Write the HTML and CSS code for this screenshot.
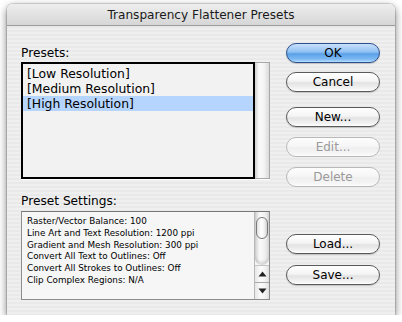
FILE: index.html
```html
<!DOCTYPE html>
<html>
<head>
<meta charset="utf-8">
<link rel="stylesheet" href="styles.css">
</head>
<body>
<div class="window">
  <div class="titlebar">Transparency Flattener Presets</div>
  <div class="content">
    <div class="left">
      <div class="label">Presets:</div>
      <div class="listbox">
        <div class="list">
          <div class="item">[Low Resolution]</div>
          <div class="item">[Medium Resolution]</div>
          <div class="item selected">[High Resolution]</div>
        </div>
        <div class="vscroll empty"></div>
      </div>
      <div class="label settings-label">Preset Settings:</div>
      <div class="settings">
        <div class="settings-text">
          <div>Raster/Vector Balance: 100</div>
          <div>Line Art and Text Resolution: 1200 ppi</div>
          <div>Gradient and Mesh Resolution: 300 ppi</div>
          <div>Convert All Text to Outlines: Off</div>
          <div>Convert All Strokes to Outlines: Off</div>
          <div>Clip Complex Regions: N/A</div>
        </div>
        <div class="vscroll">
          <div class="track"><div class="thumb"></div></div>
          <div class="arrow up"><svg width="9" height="6" viewBox="0 0 9 6"><path d="M4.5 0.5 L8.5 5.5 L0.5 5.5 Z" fill="#222"/></svg></div>
          <div class="arrow down"><svg width="9" height="6" viewBox="0 0 9 6"><path d="M0.5 0.5 L8.5 0.5 L4.5 5.5 Z" fill="#222"/></svg></div>
        </div>
      </div>
    </div>
    <div class="right">
      <div class="btn default b-ok">OK</div>
      <div class="btn b-cancel">Cancel</div>
      <div class="btn b-new">New...</div>
      <div class="btn disabled b-edit">Edit...</div>
      <div class="btn disabled b-delete">Delete</div>
      <div class="btn b-load">Load...</div>
      <div class="btn b-save">Save...</div>
    </div>
  </div>
</div>
</body>
</html>
```

FILE: styles.css
```css
html, body {
  margin: 0;
  padding: 0;
  background: #ffffff;
}
body {
  font-family: "DejaVu Sans", "Liberation Sans", sans-serif;
  color: #000;
}
.window {
  margin: 4px 0 0 7px;
  width: 388px;
  height: 311px;
  border-radius: 6px 6px 0 0;
  overflow: hidden;
  box-shadow: 0 3px 9px rgba(0, 0, 0, 0.55), 0 0 0 1px rgba(0, 0, 0, 0.12);
  background: repeating-linear-gradient(to bottom, #efefef 0px, #efefef 2px, #e9e9e9 2px, #e9e9e9 4px);
}
.titlebar {
  height: 21px;
  border-bottom: 1px solid #9c9c9c;
  background: linear-gradient(to bottom, #eeeeee, #d6d6d6);
  text-align: center;
  font-size: 12.1px;
  line-height: 22px;
  color: #1a1a1a;
}
.content {
  display: flex;
  padding-left: 14px;
  gap: 16px;
}
.left {
  width: 249px;
  padding-top: 19px;
}
.label {
  font-size: 12.2px;
  line-height: 16px;
  height: 16px;
  margin-bottom: 1px;
}
.listbox {
  display: flex;
  height: 117px;
  box-shadow: 0 1px 0 #ffffff;
}
.list {
  flex: 1;
  border: 2px solid #000;
  background: #f2f2f2;
  padding-top: 2px;
}
.item {
  font-size: 12.4px;
  line-height: 15px;
  height: 15px;
  padding-left: 4px;
  white-space: nowrap;
}
.item.selected {
  background: #b5d5ff;
}
.vscroll {
  width: 15px;
  display: flex;
  flex-direction: column;
}
.vscroll.empty {
  border: 1px solid #a8a8a8;
  border-left: none;
  width: 14px;
  background: linear-gradient(to right, #cfcfcf, #fbfbfb 30%, #f3f3f3 65%, #dadada);
}
.settings-label {
  margin-top: 14px;
  margin-bottom: 2px;
}
.settings {
  display: flex;
  height: 87px;
  border: 1px solid #8c8c8c;
  border-top-color: #777;
  background: #f6f6f6;
}
.settings-text {
  flex: 1;
  padding: 4px 0 0 5px;
  font-size: 8.8px;
  line-height: 11.8px;
  white-space: nowrap;
}
.settings .vscroll {
  width: 14px;
  border-left: 1px solid #b8b8b8;
}
.track {
  flex: 1;
  position: relative;
  background: linear-gradient(to right, #d4d4d4, #fafafa 35%, #f0f0f0 70%, #dcdcdc);
  border-bottom-left-radius: 7px;
  border-bottom-right-radius: 7px;
  box-shadow: inset 0 -3px 3px rgba(0, 0, 0, 0.12);
}
.thumb {
  position: absolute;
  left: 1px;
  right: 1px;
  top: 5px;
  height: 22px;
  border: 1px solid #7a7a7a;
  border-radius: 7px;
  box-sizing: border-box;
  background: linear-gradient(to right, #e0e0e0, #ffffff 40%, #f4f4f4 70%, #d0d0d0);
}
.arrow {
  height: 16px;
  display: flex;
  align-items: center;
  justify-content: center;
  background: linear-gradient(to right, #e6e6e6, #fbfbfb 40%, #f4f4f4 70%, #e0e0e0);
}
.arrow.up {
  border-top: 1px solid #c4c4c4;
}
.arrow.down {
  border-top: 1px solid #a8a8a8;
}
.right {
  width: 94px;
  padding-top: 17px;
  display: flex;
  flex-direction: column;
}
.btn {
  height: 20px;
  box-sizing: border-box;
  border: 1px solid #5a5a5a;
  border-radius: 10px;
  font-size: 12px;
  line-height: 18px;
  text-align: center;
  color: #000;
  background: linear-gradient(to bottom, #ffffff 0%, #f4f4f4 45%, #e3e3e3 55%, #f2f2f2 85%, #ffffff 100%);
  box-shadow: 0 1px 1px rgba(0, 0, 0, 0.18);
}
.btn.default {
  border-color: #2d4f8c;
  background: linear-gradient(to bottom, #c9e2fb 0%, #8ec0f2 45%, #5aa0e8 55%, #7fbaf3 85%, #b7e0ff 100%);
}
.btn.disabled {
  border-color: #b9b9b9;
  color: #9a9a9a;
  background: linear-gradient(to bottom, #fdfdfd 0%, #f6f6f6 45%, #efefef 55%, #f5f5f5 85%, #fdfdfd 100%);
  box-shadow: none;
}
.b-ok { margin-bottom: 9px; }
.b-cancel { margin-bottom: 15px; }
.b-new { margin-bottom: 10px; }
.b-edit { margin-bottom: 10px; }
.b-delete { margin-bottom: 47px; }
.b-load { margin-bottom: 11px; }
```
